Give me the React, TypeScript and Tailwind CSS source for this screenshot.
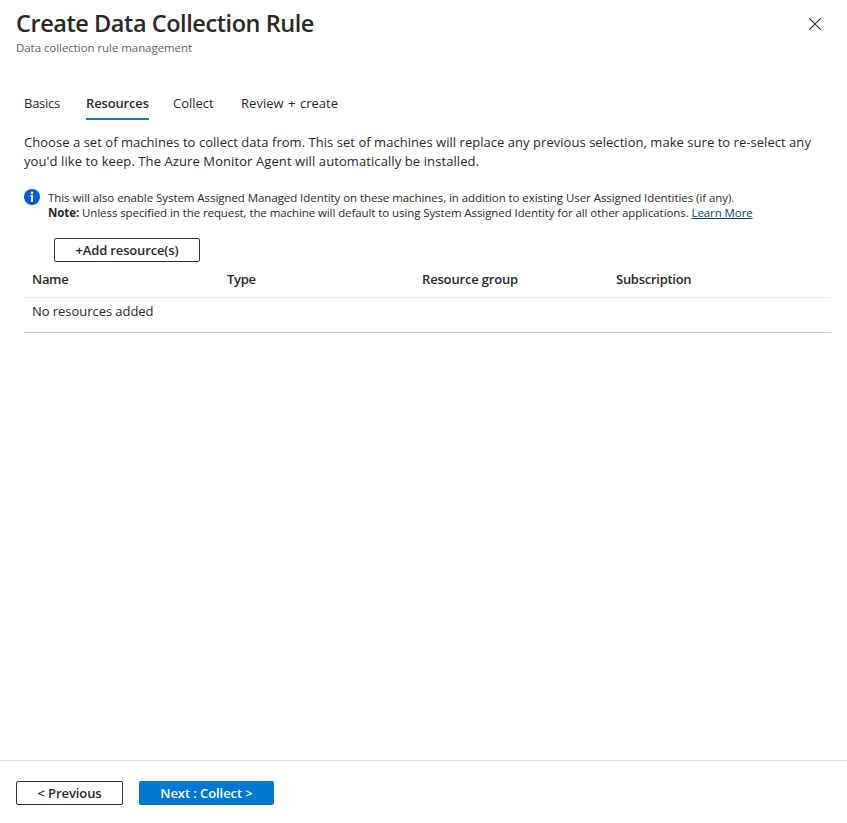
const columns = [
  { label: 'Name', style: 'w-[195px] tracking-[-0.3px]' },
  { label: 'Type', style: 'w-[195px] tracking-[-0.3px]' },
  { label: 'Resource group', style: 'w-[194px] tracking-[-0.17px]' },
  { label: 'Subscription', style: 'flex-1 tracking-[-0.27px]' },
];

function Header() {
  return (
    <header className="flex h-[60px] shrink-0 items-start justify-between pl-4 pr-[26px]">
      <div className="whitespace-nowrap">
        <h1 className="mt-[7px] text-[23.5px] leading-8 font-semibold tracking-[-0.44px]">Create Data Collection Rule</h1>
        <p className="mt-px text-[11.5px] leading-4 tracking-[-0.06px] text-[#605e5c]">Data collection rule management</p>
      </div>
      <button aria-label="Close" className="mt-[18px]">
        <svg width="12" height="12" viewBox="0 0 12 12" fill="none" stroke="#323130" strokeWidth="1.1">
          <path d="M0 0L12 12M12 0L0 12" />
        </svg>
      </button>
    </header>
  );
}

function Tabs() {
  return (
    <nav className="flex h-8 text-[13px] leading-[30px] whitespace-nowrap">
      <a className="w-[62px] tracking-[-0.25px]">Basics</a>
      <a className="mr-6 w-[63px] border-b-2 border-[#0078d4] font-semibold tracking-[-0.15px]">Resources</a>
      <a className="w-[68px]">Collect</a>
      <a className="tracking-[0.03px] [word-spacing:1px]">Review + create</a>
    </nav>
  );
}

function Notice() {
  return (
    <div className="mt-[18px] flex h-[33px]">
      <svg className="mr-2 shrink-0" width="16" height="16" viewBox="0 0 16 16">
        <circle cx="8" cy="8" r="8" fill="#015cda" />
        <circle cx="8" cy="3.8" r="1.3" fill="#fff" />
        <path d="M6 6.2h3v6.8H7V7.2H6z" fill="#fff" />
      </svg>
      <div className="mt-px text-[11.5px] leading-[15px] whitespace-nowrap">
        <p className="tracking-[-0.06px]">
          This will also enable System Assigned Managed Identity on these machines, in addition to existing User Assigned Identities (if any).
        </p>
        <p className="tracking-[-0.085px]">
          <b>Note:</b> Unless specified in the request, the machine will default to using System Assigned Identity for all other applications.{' '}
          <a className="text-[#004578] underline">Learn More</a>
        </p>
      </div>
    </div>
  );
}

export default function App() {
  return (
    <div className="flex h-[823px] w-[847px] flex-col overflow-hidden bg-white font-['Open_Sans','Noto_Sans',sans-serif] text-[#292827]">
      <Header />
      <main className="flex-1 pt-7 pr-4 pl-6">
        <Tabs />
        <div className="mt-[13px] text-[13px] leading-[19px] whitespace-nowrap">
          <p className="tracking-[0.04px]">Choose a set of machines to collect data from. This set of machines will replace any previous selection, make sure to re-select any</p>
          <p className="tracking-[0.09px]">you'd like to keep. The Azure Monitor Agent will automatically be installed.</p>
        </div>
        <Notice />
        <button className="mt-4 ml-[30px] flex h-6 w-[146px] items-center justify-center rounded-[2px] border border-[#323130] pt-0.5 text-[13px] font-semibold tracking-[-0.15px] whitespace-nowrap">
          +Add resource(s)
        </button>
        <div className="text-[13px]">
          <div className="flex h-9 border-b border-[#edebe9] pl-2 leading-[35px] font-semibold">
            {columns.map((column) => (
              <div key={column.label} className={column.style}>{column.label}</div>
            ))}
          </div>
          <div className="h-[35px] border-b border-[#c8c6c4] pl-2 leading-[27px] tracking-[-0.05px]">No resources added</div>
        </div>
      </main>
      <footer className="flex h-[63px] shrink-0 gap-4 border-t border-[#e1dfdd] pt-5 pl-4 text-[13px] font-semibold tracking-[-0.08px] whitespace-nowrap">
        <button className="flex h-6 w-[107px] items-center justify-center rounded-[2px] border border-[#323130] pt-0.5">&lt; Previous</button>
        <button className="flex h-6 w-[135px] items-center justify-center rounded-[2px] bg-[#0078d4] pt-0.5 text-white">Next : Collect &gt;</button>
      </footer>
    </div>
  );
}
